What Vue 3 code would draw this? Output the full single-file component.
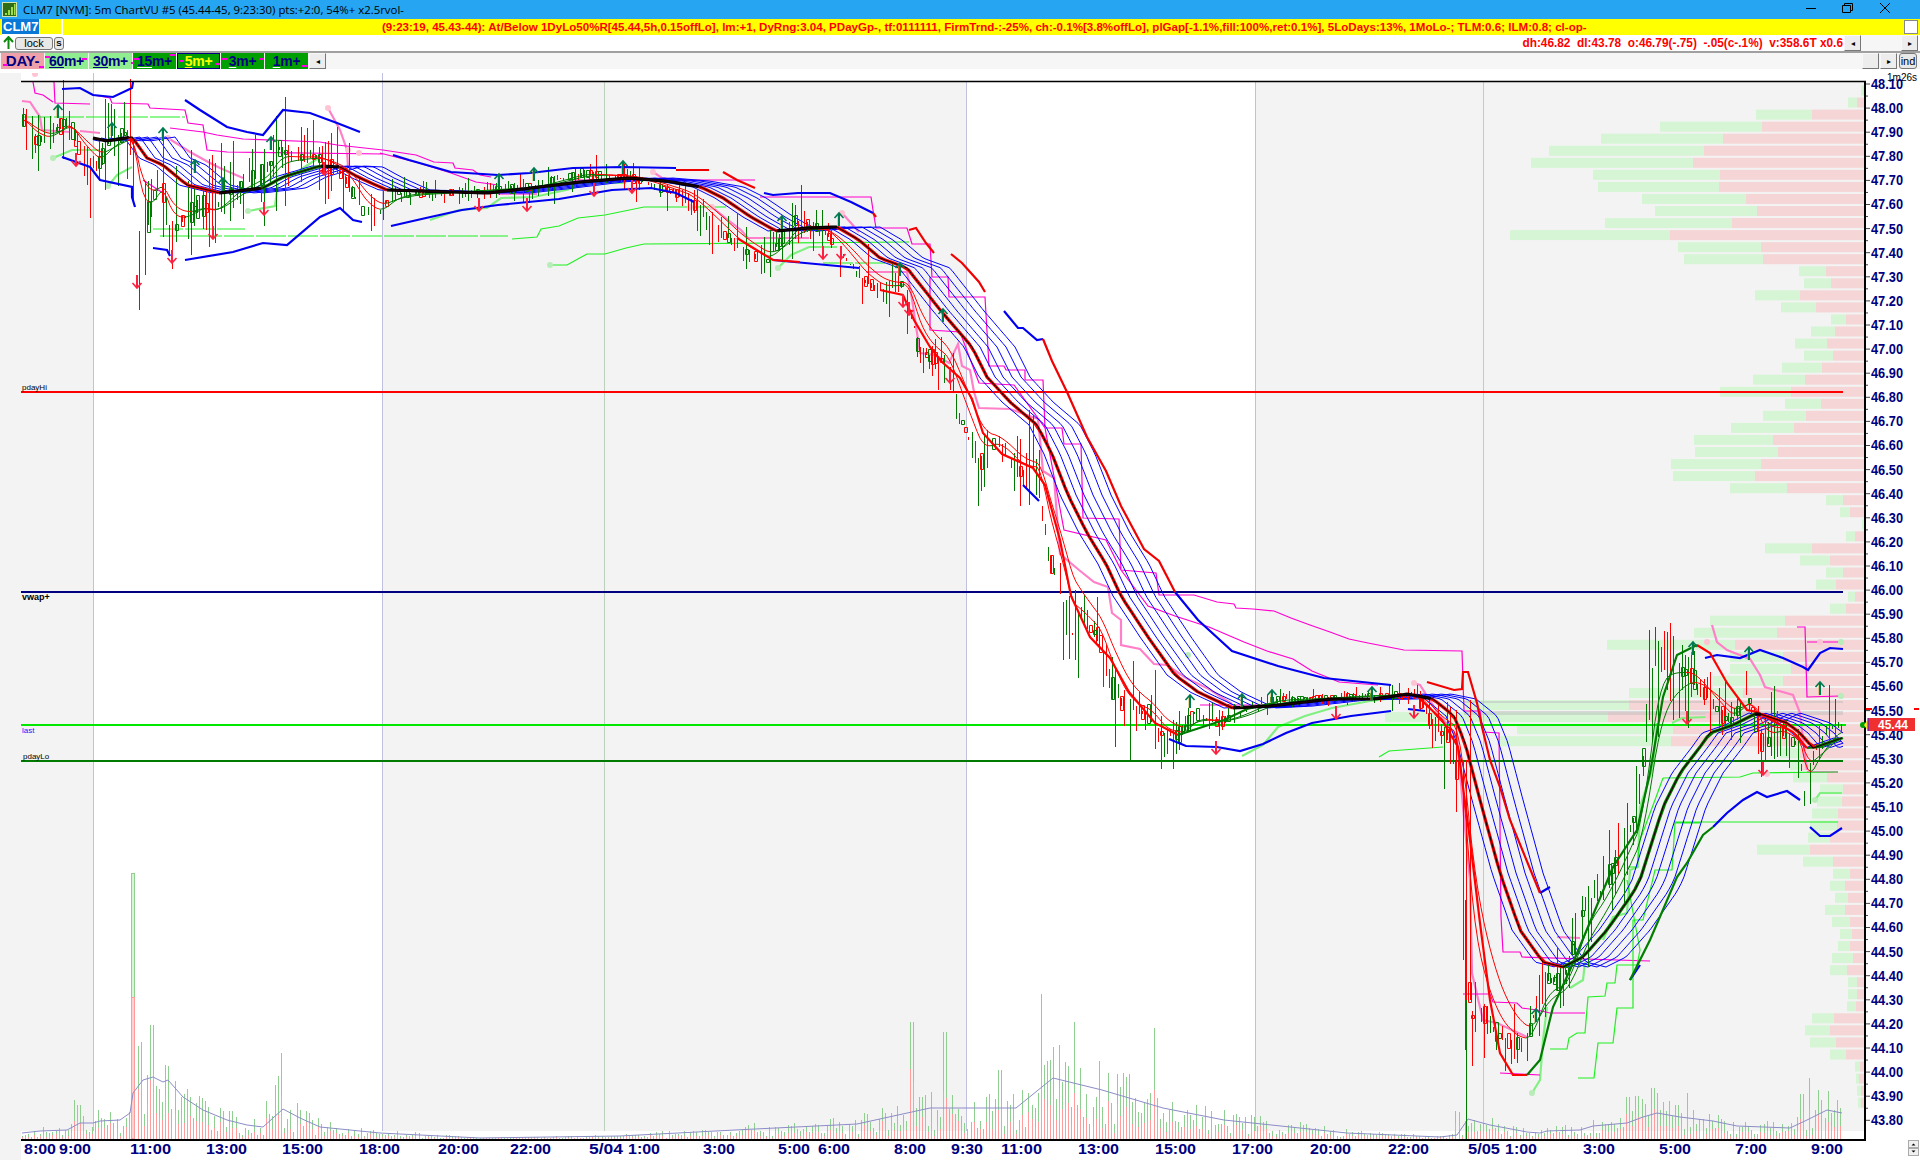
<script setup>
// all chart coordinates are page pixels (viewBox starts at y=73)
const seed = { v: 7 };
function rnd() {
  seed.v = (seed.v * 16807) % 2147483647;
  return seed.v / 2147483647;
}
function interp(list, x) {
  if (x <= list[0][0]) return list[0][1];
  for (let i = 1; i < list.length; i++) {
    if (x <= list[i][0]) {
      const a = list[i - 1];
      const b = list[i];
      return a[1] + ((b[1] - a[1]) * (x - a[0])) / (b[0] - a[0] || 1);
    }
  }
  return list[list.length - 1][1];
}
function poly(pts) {
  return pts.map((p, i) => (i ? "L" : "M") + p[0].toFixed(1) + " " + p[1].toFixed(1)).join("");
}
function polys(lists) {
  return lists.map(poly).join("");
}

const mainPts = [[93,138],[107,141],[132,137],[147,158],[163,165],[187,185],[220,193],[263,188],[283,177],[320,166],[340,167],[360,178],[387,190],[487,193],[523,189],[580,182],[630,178],[666,181],[701,187],[723,198],[751,217],[776,231],[809,228],[837,227],[859,240],[880,258],[907,268],[918,282],[941,311],[972,347],[987,377],[1010,402],[1037,425],[1052,454],[1068,495],[1087,533],[1106,564],[1121,596],[1148,637],[1175,675],[1198,692],[1232,708],[1270,706],[1332,699],[1374,699],[1408,694],[1433,699],[1454,716],[1465,743],[1480,800],[1500,873],[1520,930],[1543,962],[1563,967],[1583,957],[1607,930],[1633,893],[1640,880],[1663,807],[1680,773],[1700,747],[1710,733],[1733,725],[1757,713],[1787,723],[1800,733],[1813,748],[1842,738]];

const fastPts = [[737,238],[773,260],[800,262]];
const fastPts2 = [[880,290],[903,295],[914,320],[930,347],[941,361],[960,378],[972,399],[983,433],[1002,454],[1033,468],[1045,485],[1060,540],[1071,596],[1090,637],[1110,658],[1129,692],[1155,723],[1178,735],[1224,720],[1247,709],[1278,702]];
const fastPts3 = [[1416,695],[1442,720],[1458,747],[1463,787],[1470,840],[1480,923],[1490,1000],[1500,1053],[1513,1075],[1527,1075],[1540,1060],[1553,1007],[1570,970],[1613,867],[1637,830],[1650,773],[1663,697],[1677,655],[1697,645],[1710,653],[1727,683],[1747,710],[1757,712],[1777,723],[1793,732],[1807,748],[1820,747],[1843,738]];

const pricePts = [[23,120],[33,140],[47,140],[67,117],[80,153],[97,167],[110,140],[130,130],[140,247],[147,220],[160,173],[170,233],[182,220],[200,203],[213,213],[233,187],[253,180],[267,170],[277,147],[293,157],[317,157],[343,175],[363,213],[378,215],[393,193],[433,193],[480,190],[530,187],[580,173],[630,177],[659,187],[687,197],[709,220],[737,247],[766,262],[794,220],[823,230],[841,253],[862,280],[880,290],[905,283],[918,351],[937,358],[945,361],[960,416],[979,464],[995,440],[1018,471],[1037,468],[1048,558],[1056,575],[1071,637],[1079,616],[1098,637],[1110,685],[1125,709],[1148,713],[1163,737],[1182,733],[1194,713],[1217,723],[1240,713],[1270,699],[1301,699],[1377,695],[1416,695],[1435,730],[1454,737],[1458,790],[1470,1017],[1483,1013],[1500,1037],[1517,1043],[1527,1040],[1543,977],[1563,983],[1583,907],[1600,893],[1617,857],[1637,810],[1655,637],[1673,670],[1690,673],[1710,703],[1730,723],[1747,693],[1763,747],[1780,728],[1800,750],[1805,813],[1817,743],[1837,723],[1842,727]];
const volat = [[22,30],[130,44],[140,85],[170,62],[280,50],[360,32],[385,15],[500,12],[530,19],[660,16],[700,26],[770,28],[840,26],[900,32],[960,38],[1060,50],[1075,62],[1130,44],[1190,32],[1240,15],[1290,9],[1380,9],[1430,25],[1460,60],[1480,48],[1530,32],[1580,50],[1660,68],[1700,50],[1790,38],[1843,30]];

// blue fan = the main line delayed
const fanLags = [-8, 8, 16, 25, 34, 43];
const fanPaths = fanLags.map((lag) => {
  const pts = [];
  for (let x = lag < 0 ? 93 : 93 + lag; x <= 1843; x += 3) pts.push([x, interp(mainPts, x - lag)]);
  return poly(pts);
});

function slopeRuns(pts, flat, flatColor) {
  const runs = [];
  for (let i = 1; i < pts.length; i++) {
    const s = (pts[i][1] - pts[i - 1][1]) / (pts[i][0] - pts[i - 1][0]);
    const c = s > flat ? "#ff0000" : s < -flat ? "#007a00" : flatColor;
    const last = runs[runs.length - 1];
    if (last && last.color === c) last.pts.push(pts[i]);
    else runs.push({ color: c, pts: [pts[i - 1], pts[i]] });
  }
  return runs.map((r) => ({ color: r.color, d: poly(r.pts) }));
}
const mainSamples = [];
for (let x = 93; x <= 1842; x += 6) mainSamples.push([x, interp(mainPts, x)]);
const mainUnder = slopeRuns(mainSamples, 0.22, "#000000");
const fastRuns = [fastPts, fastPts2, fastPts3].flatMap((p) => slopeRuns(p, 0.04, "#ff0000"));

// thin moving averages of the candles
function ema(alpha) {
  const pts = [];
  let v = interp(pricePts, 23);
  for (let x = 23; x <= 1843; x += 3) {
    v += (interp(pricePts, x) - v) * alpha;
    pts.push([x, v]);
  }
  return pts;
}
const thinRuns = [0.22, 0.14].flatMap((a) => slopeRuns(ema(a), 0, "#ff0000"));

// candles
const wickRed = [];
const wickGreen = [];
const bodyRed = [];
const bodyGreen = [];
for (let x = 23; x <= 1843; x += 3.05) {
  const px = Math.round(x) + 0.5;
  const mid = interp(pricePts, x);
  const v = interp(volat, x);
  const slope = interp(pricePts, x + 6) - interp(pricePts, x - 6);
  const up = rnd() < (slope < -2 ? 0.9 : slope > 2 ? 0.38 : 0.55);
  const top = mid - v * rnd() * rnd() * 1.5;
  const bot = mid + v * rnd() * rnd() * 1.5;
  const w = up ? wickGreen : wickRed;
  if (rnd() < 0.88) w.push(`M${px} ${top.toFixed(0)}V${bot.toFixed(0)}`);
  if (rnd() < 0.34) {
    const h = 3 + v * 0.4 * rnd();
    const y = Math.round(mid - h / 2) + 0.5;
    const b = up ? bodyGreen : bodyRed;
    b.push(`M${px - 1} ${y}h3v${h.toFixed(0)}h-3z`);
  }
}
wickRed.push("M1466.5 760V1130M1470.5 700V1000M1463.5 760V960M1465.5 900V1050");
wickGreen.push("M1466.5 1000V1140");
const wickRedD = wickRed.join("");
const wickGreenD = wickGreen.join("");
const bodyRedD = bodyRed.join("");
const bodyGreenD = bodyGreen.join("");

// volume
const vma = [[22,1133],[40,1131],[67,1130],[80,1123],[93,1123],[100,1121],[120,1120],[130,1113],[133,1093],[143,1080],[153,1077],[163,1082],[168,1080],[183,1097],[203,1110],[227,1120],[247,1125],[263,1127],[283,1109],[300,1118],[320,1127],[380,1133],[480,1138],[620,1136],[735,1130],[857,1124],[930,1108],[1016,1108],[1053,1078],[1102,1090],[1163,1108],[1224,1120],[1347,1133],[1440,1137],[1457,1135],[1468,1119],[1490,1125],[1527,1132],[1540,1133],[1547,1131],[1580,1130],[1593,1126],[1627,1123],[1643,1117],[1657,1113],[1680,1117],[1713,1121],[1737,1126],[1790,1128],[1807,1120],[1827,1110],[1842,1113]];
const spikes = [[75,1100],[79,1105],[82,1116],[98,1110],[136,1040],[139,1046],[142,1042],[152,1025],[157,1086],[165,1065],[168,1066],[266,1101],[275,1085],[279,1076],[282,1053],[912,1022],[945,1032],[1041,994],[1074,1022],[1153,1028],[1050,1060],[1000,1070],[1023,1090],[1456,1111],[1459,1112],[1628,1097],[1637,1096],[1643,1099],[1653,1088],[1656,1093],[1677,1105],[1688,1093],[1802,1094],[1809,1078],[1818,1090],[1828,1091],[1838,1100]];
const volGreen = [];
const volRed = [];
for (let x = 22; x <= 1842; x += 3.05) {
  const px = Math.round(x) + 0.5;
  if (px > 130 && px < 136) continue;
  const base = 1139 - interp(vma, x);
  let top = 1139 - Math.max(1, base * (0.25 + rnd() * 1.35));
  const sp = spikes.find((s) => Math.abs(s[0] - px) < 1.6);
  if (sp) top = sp[1];
  const split = 1139 - (1139 - top) * (0.35 + rnd() * 0.25);
  volGreen.push(`M${px} ${top.toFixed(0)}V${split.toFixed(0)}`);
  volRed.push(`M${px} ${split.toFixed(0)}V1139`);
}
const volGreenD = volGreen.join("");
const volRedD = volRed.join("");
const vmaD = poly(vma);

// volume profile: [green start, red start] per 0.05 row
const profile = [[1861,1863],[1848,1857],[1756,1812],[1660,1762],[1601,1723],[1549,1704],[1531,1693],[1593,1720],[1598,1719],[1642,1746],[1655,1757],[1605,1732],[1510,1670],[1678,1761],[1684,1763],[1799,1826],[1804,1831],[1755,1800],[1781,1816],[1831,1846],[1811,1835],[1795,1827],[1804,1833],[1782,1822],[1753,1805],[1720,1791],[1785,1821],[1763,1806],[1731,1794],[1694,1773],[1695,1778],[1671,1761],[1673,1755],[1730,1787],[1826,1843],[1840,1850],[1862,1864],[1846,1855],[1765,1812],[1800,1830],[1826,1843],[1816,1836],[1848,1855],[1830,1846],[1710,1785],[1694,1777],[1607,1735],[1730,1783],[1730,1791],[1713,1783],[1629,1743],[1464,1629],[1385,1608],[1517,1673],[1497,1671],[1780,1800],[1790,1802],[1793,1827],[1820,1843],[1817,1842],[1812,1838],[1810,1837],[1808,1830],[1757,1810],[1803,1833],[1833,1850],[1830,1845],[1835,1848],[1825,1845],[1832,1850],[1840,1852],[1838,1850],[1832,1853],[1830,1847],[1848,1857],[1848,1857],[1847,1856],[1812,1834],[1805,1830],[1810,1836],[1830,1846],[1855,1860],[1856,1859],[1857,1861],[1858,1861]];
const profileRows = profile.map((r, i) => ({ y: 85.5 + 12.05 * i, g: r[0], r: r[1] }));

// magenta steps
const magenta = polys([
  [[33,82],[35,93],[43,95],[53,102]],
  [[54,82],[55,103],[90,104]],
  [[93,95],[110,98],[112,103],[148,104],[150,108],[185,110],[188,123],[203,125],[207,150],[227,152],[383,154]],
  [[170,128],[203,132],[217,135],[243,139],[320,142],[337,145],[383,150],[416,155],[434,162],[453,163],[455,168],[473,170],[480,175],[491,177]],
  [[380,153],[419,163],[451,173],[476,182],[498,185]],
  [[569,180],[755,180]],
  [[498,194],[537,194]],
  [[760,197],[871,197],[873,210],[876,228],[907,228],[912,244],[930,244],[932,277],[948,277],[949,297],[985,297],[989,366],[1004,366],[1006,370],[1025,370],[1025,380],[1043,380],[1045,428],[1062,428],[1064,444],[1081,444],[1083,518],[1119,519],[1121,570],[1156,573],[1159,595],[1194,595],[1217,602],[1234,604],[1236,608],[1253,609],[1274,611],[1291,618],[1310,625],[1330,632],[1349,639],[1368,643],[1404,650],[1462,651],[1464,711],[1480,711],[1483,732],[1499,733],[1501,917],[1503,952],[1520,952],[1522,957],[1650,961]],
  [[930,277],[930,330],[960,332],[979,383],[1014,385],[1045,428],[1064,530],[1106,540],[1121,570],[1148,606],[1175,616],[1209,627],[1244,642],[1267,651],[1293,659],[1312,671],[1339,682],[1378,685]],
  [[1200,705],[1297,705]],
  [[1463,994],[1490,994],[1493,1002],[1517,1003],[1522,1008],[1537,1010],[1550,1013],[1585,1013]],
  [[1797,627],[1805,627],[1807,697],[1840,696]],
  [[1807,642],[1840,642]],
  [[1807,772],[1838,772]],
  [[143,180],[163,193]],
  [[1500,1073],[1540,1075]],
]);
const pink = polys([
  [[22,101],[30,102],[40,117],[42,130],[70,132]],
  [[80,131],[100,133]],
  [[168,138],[190,152],[210,163],[220,168],[243,178]],
  [[328,108],[340,130],[347,150],[348,167]],
  [[653,172],[662,178],[680,180]],
  [[712,207],[728,220],[741,230],[748,238],[809,238]],
  [[842,213],[859,232]],
  [[866,272],[907,272],[912,299],[920,353],[935,355],[949,363],[958,344],[962,366],[970,370],[974,392],[979,408],[1010,409],[1038,419],[1043,471],[1054,478],[1060,554],[1079,570],[1094,582],[1108,587],[1112,613],[1121,620],[1121,645],[1140,649],[1154,664],[1167,665],[1186,678],[1209,689],[1232,704]],
  [[1413,683],[1420,685],[1438,713],[1457,737],[1463,807],[1470,880],[1472,973],[1483,1020],[1497,1023],[1527,1037]],
  [[1557,937],[1580,938]],
  [[1712,625],[1717,642],[1727,650],[1750,659],[1760,675],[1765,687],[1793,695],[1800,713],[1803,740],[1807,770]],
]);
const lightGreen = polys([
  [[53,158],[72,150],[100,150]],
  [[108,186],[117,175],[132,167]],
  [[248,211],[275,206],[278,183]],
  [[300,170],[320,157]],
  [[430,220],[459,210],[487,208],[501,198],[534,197],[566,190],[591,183],[626,183]],
  [[778,268],[791,255],[809,247],[837,247]],
  [[1242,756],[1263,745],[1278,727],[1305,716],[1332,708],[1370,701],[1404,697]],
  [[1532,1093],[1540,1080],[1543,1040],[1547,1007]],
  [[1570,988],[1583,980],[1585,962]],
  [[1603,940],[1613,917],[1627,913],[1630,870],[1638,867],[1640,807],[1653,767],[1657,723]],
  [[1672,723],[1682,718],[1707,717]],
  [[1815,800],[1820,793],[1842,793]],
]);
const brightGreen = polys([
  [[512,239],[537,237],[541,229],[559,226],[578,218],[605,215],[644,207],[726,207]],
  [[550,265],[567,265],[587,254],[605,254],[626,248],[644,244],[909,242]],
  [[1379,757],[1389,751],[1443,747]],
  [[1663,778],[1740,777],[1753,773],[1838,772]],
  [[1627,867],[1637,867],[1640,840],[1655,800],[1663,778]],
  [[1675,822],[1838,822]],
  [[1550,1049],[1567,1049],[1569,1038],[1577,1033],[1585,1033],[1588,997],[1605,996],[1607,983],[1615,983],[1617,965],[1637,965],[1640,950],[1627,880]],
  [[1578,1078],[1594,1078],[1598,1043],[1613,1043],[1617,1008],[1633,1008],[1633,920],[1643,920],[1655,870],[1672,870],[1675,823],[1700,823]],
]);
const dashedGreen = polys([
  [[22,117],[185,117]],
  [[160,236],[508,236]],
  [[153,229],[245,229]],
  [[823,263],[894,263]],
]);
const bandBlue = polys([
  [[62,89],[80,88],[93,95],[113,97],[132,88],[133,82]],
  [[185,100],[200,110],[227,127],[247,132],[263,135],[283,110],[310,113],[337,123],[360,132]],
  [[62,157],[90,167],[100,180],[132,187],[132,197],[135,207]],
  [[153,248],[167,250],[170,256]],
  [[185,260],[233,252],[263,243],[287,245],[320,217],[340,208],[353,220],[362,222]],
  [[391,226],[426,218],[462,210],[498,205],[559,199],[612,190],[651,188],[676,193],[694,202]],
  [[393,155],[409,160],[451,172],[498,175],[530,173],[573,168],[623,167],[676,168]],
  [[764,193],[773,195],[798,193],[830,193],[851,202],[873,213]],
  [[1004,311],[1018,328],[1023,328],[1037,340],[1043,339]],
  [[1175,592],[1198,620],[1232,651],[1278,666],[1324,678],[1391,685]],
  [[1705,658],[1717,655],[1740,658],[1760,650],[1783,658],[1803,667],[1808,670],[1820,653],[1830,648],[1843,649]],
  [[1630,980],[1640,965]],
  [[1713,827],[1727,813],[1743,800],[1757,792],[1767,797],[1787,791],[1800,800]],
  [[1810,827],[1820,836],[1830,836],[1842,828]],
  [[1023,485],[1039,501]],
  [[1169,739],[1186,746],[1217,747],[1240,751],[1263,744],[1286,733],[1312,723],[1351,716],[1391,711]],
  [[1408,709],[1425,711]],
  [[773,260],[805,263],[859,268]],
  [[1540,893],[1550,887]],
]);
const bandRed = polys([
  [[676,170],[709,170]],
  [[723,172],[737,180],[755,188]],
  [[873,213],[876,217]],
  [[909,230],[916,228],[926,243],[934,253]],
  [[951,254],[962,263],[979,282],[985,292]],
  [[1043,339],[1052,361],[1067,392],[1087,437],[1106,471],[1121,506],[1144,549],[1159,561],[1175,592]],
  [[1427,682],[1454,690],[1462,689],[1463,672],[1468,672],[1477,703],[1482,727],[1490,760],[1500,787],[1510,820],[1540,893]],
]);
const bandGreen = polys([
  [[1630,980],[1650,940],[1677,877],[1687,863],[1703,835],[1713,827]],
]);

const upArrows = [[58,105],[112,123],[163,128],[195,160],[223,178],[271,137],[499,174],[534,168],[623,161],[782,216],[839,213],[900,263],[943,309],[1190,695],[1242,694],[1272,690],[1372,687],[1536,1009],[1693,642],[1749,647],[1820,682]];
const downArrows = [[76,166],[137,288],[172,263],[213,239],[264,215],[324,175],[479,211],[527,211],[594,196],[632,193],[823,259],[841,259],[903,307],[909,315],[950,383],[1216,754],[1336,719],[1414,718],[1687,724],[1763,775]];
const pinkDots = [[35,74],[168,138],[328,108],[348,150],[359,153],[653,172],[712,207],[690,207],[842,213],[1414,683],[1707,642],[1820,642],[1767,774],[1708,716]];
const greenDots = [[53,158],[108,186],[248,211],[550,265],[1188,655],[1532,1093],[1841,642],[1841,696],[1815,800],[778,268]];

const prices = [];
for (let i = 0; i <= 43; i++) {
  const p = 48.1 - i * 0.1;
  prices.push({ label: p.toFixed(2), y: 108 + (48 - p) * 241 });
}
const ticks = [];
for (let i = 0; i <= 86; i++) {
  ticks.push({ y: 84 + i * 12.05, long: i % 2 === 0 });
}
const times = [
  ["8:00", 24, 32], ["9:00", 59, 32], ["11:00", 130, 41], ["13:00", 206, 41], ["15:00", 282, 41], ["18:00", 359, 41], ["20:00", 438, 41],
  ["22:00", 510, 41], ["5/04", 589, 34], ["1:00", 628, 32], ["3:00", 703, 32], ["5:00", 778, 32], ["6:00", 818, 32], ["8:00", 894, 32],
  ["9:30", 951, 32], ["11:00", 1001, 41], ["13:00", 1078, 41], ["15:00", 1155, 41], ["17:00", 1232, 41], ["20:00", 1310, 41], ["22:00", 1388, 41],
  ["5/05", 1468, 32], ["1:00", 1505, 32], ["3:00", 1583, 32], ["5:00", 1659, 32], ["7:00", 1735, 32], ["9:00", 1811, 32],
];
const tabs = [
  { num: "60", kind: "lite", marks: [[0, 3], [37, 5]] },
  { num: "30", kind: "lite", marks: [[42, 9]] },
  { num: "15", kind: "dark", marks: [[1, 5], [37, 1]] },
  { num: "5", kind: "sel", marks: [[1, 6], [37, 9]] },
  { num: "3", kind: "dark", marks: [[1, 5], [38, 5]] },
  { num: "1", kind: "dark", marks: [[37, 12]] },
];
const headline = "(9:23:19, 45.43-44): At/Below 1DyLo50%R[45.44,5h,0.15offLo], lm:+1, DyRng:3.04, PDayGp-, tf:0111111, FirmTrnd-:-25%, ch:-0.1%[3.8%offLo], plGap[-1.1%,fill:100%,ret:0.1%], 5LoDays:13%, 1MoLo-; TLM:0.6; ILM:0.8; cl-op-";
</script>

<template>
  <div class="win">
    <div class="titlebar">
      <svg class="appicon" width="15" height="15" viewBox="0 0 15 15">
        <rect x="0.5" y="0.5" width="14" height="14" fill="#2f6d16" stroke="#cfe6b0" />
        <path d="M3 11h2v2H3zM6 8h2v5H6zM9 5h2v8H9zM12 2h1.500v11H12z" fill="#9fe04a" />
      </svg>
      <span class="wintitle">CLM7 [NYM]: 5m ChartVU #5 (45.44-45, 9:23:30) pts:+2:0, 54%+ x2.5rvol-</span>
      <svg class="winbtns" width="100" height="19" viewBox="0 0 100 19">
        <path d="M0 8.500h10" stroke="#000" fill="none" />
        <path d="M36.500 5.500h8v7h-8zM38.500 5.500v-2h8v7h-2" stroke="#000" fill="none" />
        <path d="M74 3l10 10M84 3l-10 10" stroke="#000" fill="none" />
      </svg>
    </div>

    <div class="headrow">
      <div class="symbox"><span class="symsel">CLM7</span></div>
      <span class="headline">{{ headline }}</span>
      <span class="headcheck"></span>
    </div>

    <div class="inforow">
      <svg width="11" height="14" viewBox="0 0 11 14" class="lockarrow">
        <path d="M5.500 13V2M1 6l4.500-5L10 6" stroke="#0a8a0a" stroke-width="2" fill="none" />
      </svg>
      <button class="btn lockbtn">lock</button>
      <button class="btn sbtn">S</button>
      <span class="stats">dh:46.82&nbsp; dl:43.78&nbsp; o:46.79(-.75)&nbsp; -.05(c-.1%)&nbsp; v:358.6T x0.6</span>
      <div class="hscroll">
        <button class="sbar">◂</button>
        <span class="strack"></span>
        <button class="sbar">▸</button>
      </div>
    </div>

    <div class="tabrow">
      <div class="tab day">
        <span>DAY-</span>
        <i class="mark" style="left: 2px; top: 11px; width: 5px"></i>
        <i class="mark" style="left: 38px; top: 13px; width: 5px"></i>
      </div>
      <div v-for="t in tabs" :key="t.num" class="tab" :class="t.kind">
        <span><u>{{ t.num }}</u>m+</span>
        <i v-for="(m, i) in t.marks" :key="i" class="mark" :style="{ left: m[0] + 'px', top: m[1] + 'px' }"></i>
      </div>
      <button class="sbar tabarrow">◂</button>
      <span class="strack"></span>
      <button class="sbar blank"></button>
      <button class="sbar blank">▸</button>
      <button class="btn indbtn">ind</button>
    </div>

    <svg class="chart" width="1920" height="1087" viewBox="0 73 1920 1087">
      <!-- backgrounds -->
      <rect x="0" y="73" width="21" height="1087" fill="#f3f3f3" />
      <rect x="21" y="81" width="72" height="1050" fill="#f3f3f3" />
      <rect x="382" y="81" width="584" height="1050" fill="#f3f3f3" />
      <rect x="1255" y="81" width="610" height="1050" fill="#f3f3f3" />

      <!-- volume profile -->
      <g>
        <g v-for="(r, i) in profileRows" :key="i">
          <rect :x="r.g" :y="r.y" :width="r.r - r.g" height="10" fill="#d5f5d5" />
          <rect :x="r.r" :y="r.y" :width="1865 - r.r" height="10" fill="#f5d5d5" />
        </g>
      </g>

      <!-- day separators -->
      <path d="M93.500 73V1131M382.500 73V1131M966.500 81V1131M1255.500 81V1131" stroke="#c0c0e0" fill="none" />
      <path d="M604.500 81V1131M1483.500 81V1131" stroke="#bcd0bc" fill="none" />

      <!-- volume -->
      <path :d="volGreenD" stroke="#8fcf8f" fill="none" />
      <path :d="volRedD" stroke="#ff9c9c" fill="none" />
      <rect x="131.500" y="873.500" width="3" height="124" fill="#d5f5d5" stroke="#8fcf8f" />
      <rect x="131.500" y="997.500" width="3" height="141" fill="#ffd0d0" stroke="#ff9c9c" />
      <path :d="vmaD" stroke="#8c8cc8" fill="none" />

      <!-- session range lines -->
      <path d="M1464 702H1843M1464 712H1843M1464 714H1843" stroke="#bdbdbd" fill="none" />

      <!-- steps -->
      <path :d="pink" stroke="#ff80c8" stroke-width="2.200" fill="none" />
      <path :d="lightGreen" stroke="#80f080" stroke-width="2.200" fill="none" />
      <path :d="magenta" stroke="#ff00d0" stroke-width="1.200" fill="none" />
      <path :d="brightGreen" stroke="#20f020" stroke-width="1.200" fill="none" />
      <path :d="dashedGreen" stroke="#20f020" stroke-width="1.200" stroke-dasharray="30 2" fill="none" />
      <circle v-for="(d, i) in pinkDots" :key="'p' + i" :cx="d[0]" :cy="d[1]" r="3" fill="#ffc4d4" />
      <circle v-for="(d, i) in greenDots" :key="'g' + i" :cx="d[0]" :cy="d[1]" r="3" fill="#b8ecb8" />

      <!-- levels -->
      <path d="M21 392H1843" stroke="#ff0000" stroke-width="2" />
      <path d="M21 592H1843" stroke="#000080" stroke-width="2" />
      <path d="M21 725H1846" stroke="#00e800" stroke-width="2" />
      <path d="M21 761H1843" stroke="#007a00" stroke-width="2" />
      <text x="22" y="390" class="lvl">pdayHi</text>
      <text x="22" y="600" class="lvl bold">vwap+</text>
      <text x="22" y="733" class="lvl last">last</text>
      <text x="23" y="759" class="lvl">pdayLo</text>

      <!-- fan -->
      <path v-for="(d, i) in fanPaths" :key="i" :d="d" stroke="#0000ff" stroke-width="1" fill="none" />

      <!-- candles -->
      <path :d="wickRedD" stroke="#ff0000" fill="none" />
      <path :d="wickGreenD" stroke="#007a00" fill="none" />
      <path :d="bodyRedD" stroke="#ff0000" fill="none" />
      <path :d="bodyGreenD" stroke="#007a00" fill="none" />
      <path v-for="(r, i) in thinRuns" :key="'t' + i" :d="r.d" :stroke="r.color" stroke-width="1" fill="none" />

      <!-- thick lines -->
      <path :d="bandBlue" stroke="#0000f0" stroke-width="2.200" fill="none" />
      <path :d="bandRed" stroke="#f00000" stroke-width="2.200" fill="none" />
      <path :d="bandGreen" stroke="#008000" stroke-width="2.200" fill="none" />
      <path v-for="(r, i) in fastRuns" :key="'f' + i" :d="r.d" :stroke="r.color" stroke-width="2.200" fill="none" />
      <path v-for="(r, i) in mainUnder" :key="'m' + i" :d="r.d" :stroke="r.color" stroke-width="3.200" fill="none" />
      <path :d="poly(mainPts)" stroke="#200000" stroke-width="1.200" fill="none" />

      <!-- signal arrows -->
      <g v-for="(a, i) in upArrows" :key="'u' + i" :transform="`translate(${a[0]} ${a[1]})`">
        <path d="M-1 1V13" stroke="#d0b040" stroke-width="1" />
        <path d="M0 1V13" stroke="#007a50" stroke-width="2" />
        <path d="M-4.500 5L0 0L4.500 5" stroke="#007a50" stroke-width="1.600" fill="none" />
      </g>
      <g v-for="(a, i) in downArrows" :key="'d' + i" :transform="`translate(${a[0]} ${a[1]})`">
        <path d="M0 -1V-13" stroke="#ff2040" stroke-width="2" />
        <path d="M-4.500 -5L0 0L4.500 -5" stroke="#ff2040" stroke-width="1.600" fill="none" />
      </g>

      <!-- frame -->
      <path d="M21 81.500H1866" stroke="#000" stroke-width="1.400" />
      <path d="M21 1140H1866" stroke="#000" stroke-width="2" />
      <path d="M1865 81V1141" stroke="#000" stroke-width="2" />
      <path
        v-for="(t, i) in ticks"
        :key="'k' + i"
        :d="`M1866 ${t.y}h${t.long ? 4 : 2}`"
        stroke="#444"
        fill="none"
      />

      <!-- axis -->
      <text
        v-for="p in prices"
        :key="p.label"
        x="1871"
        :y="p.y + 5"
        class="axis"
        textLength="32"
        lengthAdjust="spacingAndGlyphs"
      >{{ p.label }}</text>
      <text
        v-for="(t, i) in times"
        :key="i"
        :x="t[1]"
        y="1154"
        class="axis"
        :textLength="t[2]"
        lengthAdjust="spacingAndGlyphs"
      >{{ t[0] }}</text>
      <text x="1887" y="81" class="timer">1m26s</text>

      <!-- last price marker -->
      <path d="M1866 709h6M1914 709h5" stroke="#ff0000" stroke-width="2" />
      <rect x="1868" y="718" width="47" height="13" fill="#f03030" />
      <text x="1878" y="729" class="lastprice">45.44</text>
      <circle cx="1863" cy="725" r="3" fill="#00a000" />
      <path d="M1864 725L1868 719V731z" fill="#ffe020" />
      <path d="M1868 718V731" stroke="#2020ff" />

      <!-- small spin control -->
      <rect x="1908.500" y="1140.500" width="10" height="7" fill="#f0f0f0" stroke="#aaa" />
      <rect x="1908.500" y="1148.500" width="10" height="7" fill="#f0f0f0" stroke="#aaa" />
      <path d="M1911.500 1145.500l2-2 2 2zM1911.500 1150.500l2 2 2-2z" fill="#000" />
    </svg>
  </div>
</template>

<style scoped>
.win {
  width: 1920px;
  height: 1160px;
  overflow: hidden;
  background: #fff;
  font-family: "Liberation Sans", Arial, sans-serif;
  display: flex;
  flex-direction: column;
}
.titlebar {
  height: 19px;
  background: #25a5f2;
  display: flex;
  align-items: center;
  padding-left: 2px;
  flex: none;
}
.appicon {
  flex: none;
}
.wintitle {
  margin-left: 6px;
  font-family: "Open Sans", "Liberation Sans", sans-serif;
  font-size: 11.400px;
  color: #000;
  white-space: nowrap;
}
.winbtns {
  margin-left: auto;
  margin-right: 14px;
}
.headrow {
  height: 16px;
  background: #ff0;
  display: flex;
  align-items: center;
  flex: none;
}
.symbox {
  width: 61px;
  height: 16px;
  margin-left: 2px;
  border-right: 2px solid #fff;
  border-bottom: 1px solid #fff;
  box-sizing: border-box;
  font-size: 13px;
  font-weight: bold;
  line-height: 15px;
}
.symsel {
  background: #0a78d7;
  color: #fff;
  display: inline-block;
  padding: 0 1px;
}
.headline {
  margin-left: 319px;
  color: #ff0000;
  font-size: 11.570px;
  font-weight: bold;
  white-space: nowrap;
}
.headcheck {
  margin-left: auto;
  margin-right: 2px;
  width: 12px;
  height: 12px;
  border: 1px solid #888;
  background: #fff;
}
.inforow {
  height: 16px;
  display: flex;
  align-items: center;
  flex: none;
  border-bottom: 2px solid #a0a0a0;
  box-sizing: content-box;
}
.lockarrow {
  margin-left: 3px;
  flex: none;
}
.btn {
  font-family: "Liberation Sans", Arial, sans-serif;
  font-size: 11px;
  color: #000;
  background: #e8e8e8;
  border: 1px solid #777;
  border-radius: 3px;
  padding: 0;
  height: 13px;
  line-height: 11px;
  flex: none;
}
.lockbtn {
  width: 38px;
  margin-left: 1px;
}
.sbtn {
  width: 10px;
  margin-left: 1px;
  font-size: 8px;
  font-weight: bold;
}
.stats {
  margin-left: auto;
  color: #ff0000;
  font-size: 11.850px;
  font-weight: bold;
  white-space: pre;
}
.hscroll {
  width: 74px;
  margin-left: 1px;
  margin-right: 2px;
  display: flex;
  flex: none;
}
.sbar {
  width: 17px;
  height: 16px;
  flex: none;
  background: #ededed;
  border: 1px solid;
  border-color: #f8f8f8 #777 #777 #f8f8f8;
  padding: 0;
  font-size: 8px;
  line-height: 13px;
  color: #000;
}
.strack {
  flex: 1;
  background: #f6f6f6;
}
.tabrow {
  height: 16px;
  display: flex;
  flex: none;
  gap: 1px;
  background: #f4f4f4;
}
.tab {
  position: relative;
  width: 43px;
  height: 16px;
  box-sizing: border-box;
  flex: none;
  color: #000080;
  font-size: 14px;
  font-weight: bold;
  letter-spacing: -0.300px;
  line-height: 16px;
  text-align: center;
}
.tab.day {
  margin-left: 1px;
  background: #f0a0a8;
  font-size: 15px;
}
.tab.lite {
  background: #90ee90;
}
.tab.dark {
  background: #00a000;
}
.tab.dark u {
  text-decoration-color: #fff;
}
.tab.sel {
  background: #00a000;
  color: #ff0;
  border: 1px solid #000080;
  line-height: 14px;
}
.mark {
  position: absolute;
  width: 5px;
  height: 2px;
  background: #ff00e0;
}
.indbtn {
  width: 18px;
  height: 16px;
  margin: 0 3px 0 1px;
  font-size: 11px;
}
.chart {
  flex: none;
  display: block;
  margin-top: 4px;
}
.axis {
  font-family: "Liberation Sans", Arial, sans-serif;
  font-size: 15px;
  font-weight: bold;
  fill: #000080;
}
.lvl {
  font-family: "Liberation Sans", Arial, sans-serif;
  font-size: 8px;
  fill: #000;
}
.lvl.bold {
  font-size: 9px;
  font-weight: bold;
}
.lvl.last {
  fill: #2020ff;
}
.timer {
  font-family: "Liberation Sans", Arial, sans-serif;
  font-size: 10px;
  fill: #000;
}
.lastprice {
  font-family: "Liberation Sans", Arial, sans-serif;
  font-size: 12px;
  font-weight: bold;
  fill: #fff;
}
</style>

<style>
html,
body {
  margin: 0;
  background: #fff;
}
</style>
